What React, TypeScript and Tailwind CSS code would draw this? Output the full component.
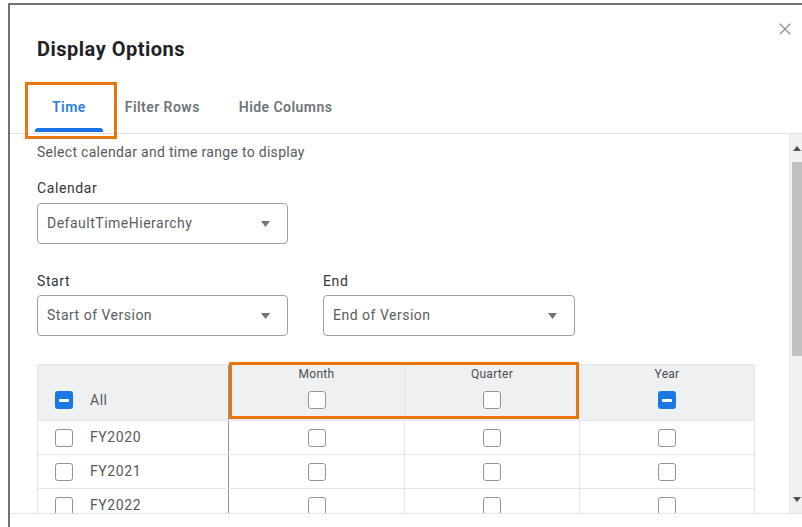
import { X } from "lucide-react";

const years = ["FY2020", "FY2021", "FY2022"];

const Box = ({ checked = false }: { checked?: boolean }) =>
  checked ? (
    <span className="flex h-[18px] w-[18px] items-center justify-center rounded-[3px] bg-[#1a77e3]">
      <span className="h-[3px] w-[10px] rounded-[1px] bg-white" />
    </span>
  ) : (
    <span className="block h-[18px] w-[18px] rounded-[3px] border-[1.5px] border-[#8e959d] bg-white" />
  );

const Select = ({ value, className = "" }: { value: string; className?: string }) => (
  <div
    className={`flex h-[41px] items-center justify-between rounded-[4px] border border-[#9aa1a9] pl-[9px] pr-[17px] text-[14px] tracking-[0.5px] text-[#595d62] ${className}`}
  >
    <span>{value}</span>
    <svg width="9" height="6" viewBox="0 0 9 6">
      <path d="M0 0h9L4.5 6z" fill="#6f757c" />
    </svg>
  </div>
);

const Tab = ({ label, active = false }: { label: string; active?: boolean }) => (
  <div
    className={`relative flex h-[48px] items-center px-[17px] pb-[2px] text-[14px] font-semibold tracking-[0.45px] ${
      active ? "text-[#2b7ee2]" : "text-[#6f7479]"
    }`}
  >
    {label}
    {active && <span className="absolute bottom-0 left-0 right-0 h-[4px] rounded-t-[3px] bg-[#1a73e8]" />}
  </div>
);

export default function App() {
  return (
    <div className="h-[527px] w-[802px] overflow-hidden bg-white font-['Roboto',sans-serif]">
      <div className="ml-[8px] mt-[3px] flex h-[524px] w-[794px] flex-col border-l-2 border-t-2 border-[#727272]">
        {/* header */}
        <div className="relative">
          <h1 className="pl-[27px] pt-[32px] pb-[23px] text-[20px] font-bold leading-[24px] tracking-[0.5px] text-[#1f2226]">
            Display Options
          </h1>
          <X className="absolute right-[7px] top-[14px] text-[#8a9099]" size={20} strokeWidth={1.4} />
        </div>

        {/* tabs */}
        <div className="relative flex h-[50px] gap-[5px] border-b border-[#dfe2e6] pl-[25px]">
          <Tab label="Time" active />
          <Tab label="Filter Rows" />
          <Tab label="Hide Columns" />
          <span className="absolute left-[15px] top-[-2px] h-[57px] w-[92px] border-[3px] border-[#e8760c]" />
        </div>

        {/* scrolling body */}
        <div className="flex h-[379px] overflow-hidden">
          <div className="flex-1 pl-[27px] pt-[9px]">
            <p className="text-[14px] leading-[18px] tracking-[0.3px] text-[#55595e]">
              Select calendar and time range to display
            </p>

            <p className="mt-[18px] text-[14px] leading-[18px] tracking-[0.6px] text-[#33363a]">Calendar</p>
            <Select value="DefaultTimeHierarchy" className="mt-[6px] w-[251px]" />

            <div className="mt-[28px] flex gap-[35px]">
              <div>
                <p className="text-[14px] leading-[18px] tracking-[0.6px] text-[#33363a]">Start</p>
                <Select value="Start of Version" className="mt-[5px] w-[251px]" />
              </div>
              <div>
                <p className="text-[14px] leading-[18px] tracking-[0.6px] text-[#33363a]">End</p>
                <Select value="End of Version" className="mt-[5px] w-[252px]" />
              </div>
            </div>

            {/* time levels grid */}
            <div className="relative mt-[28px] w-[718px]">
              <div className="grid grid-cols-[192px_175px_175px_176px] border-t border-[#e3e6ea] bg-[#eef0f2] text-[#55595e]">
                <div className="flex h-[55px] items-end gap-[17px] border-l border-r border-r-[#8f959c] border-l-[#e3e6ea] pb-[11px] pl-[17px]">
                  <Box checked />
                  <span className="text-[14px] leading-[18px] tracking-[0.5px]">All</span>
                </div>
                {["Month", "Quarter", "Year"].map((l, i) => (
                  <div
                    key={l}
                    className={`flex h-[55px] flex-col items-center pt-[1px] ${i > 0 ? "border-l border-[#e3e6ea]" : ""} ${
                      i === 2 ? "border-r border-[#e3e6ea]" : ""
                    }`}
                  >
                    <span className="text-[12px] leading-[16px] tracking-[0.3px] text-[#4a4e53]">{l}</span>
                    <span className="mt-[9px]">
                      <Box checked={l === "Year"} />
                    </span>
                  </div>
                ))}
              </div>
              {years.map((y) => (
                <div
                  key={y}
                  className="grid h-[34px] grid-cols-[192px_175px_175px_176px] border-t border-[#e3e6ea] text-[#55595e]"
                >
                  <div className="flex items-center gap-[17px] border-l border-r border-r-[#8f959c] border-l-[#e3e6ea] pl-[17px]">
                    <Box />
                    <span className="text-[14px] tracking-[0.6px]">{y}</span>
                  </div>
                  <div className="flex items-center justify-center">
                    <Box />
                  </div>
                  <div className="flex items-center justify-center border-l border-[#e3e6ea]">
                    <Box />
                  </div>
                  <div className="flex items-center justify-center border-l border-r border-[#e3e6ea]">
                    <Box />
                  </div>
                </div>
              ))}
              <span className="absolute left-[192px] top-[-2px] h-[57px] w-[350px] border-[3px] border-[#e8760c]" />
            </div>
          </div>

          {/* scrollbar */}
          <div className="flex w-[13px] flex-col border-l border-[#ededed] bg-[#f1f1f1]">
            <div className="flex h-[28px] items-center justify-end pr-[1px]">
              <svg width="8" height="5" viewBox="0 0 8 5">
                <path d="M0 5L4 0l4 5z" fill="#505050" />
              </svg>
            </div>
            <div className="ml-[2px] h-[194px] bg-[#c1c1c1]" />
            <div className="flex-1" />
            <div className="flex h-[28px] items-center justify-end pr-[1px]">
              <svg width="8" height="5" viewBox="0 0 8 5">
                <path d="M0 0h8L4 5z" fill="#505050" />
              </svg>
            </div>
          </div>
        </div>

        {/* footer */}
        <div className="flex-1 border-t border-[#e3e6ea]" />
      </div>
    </div>
  );
}
